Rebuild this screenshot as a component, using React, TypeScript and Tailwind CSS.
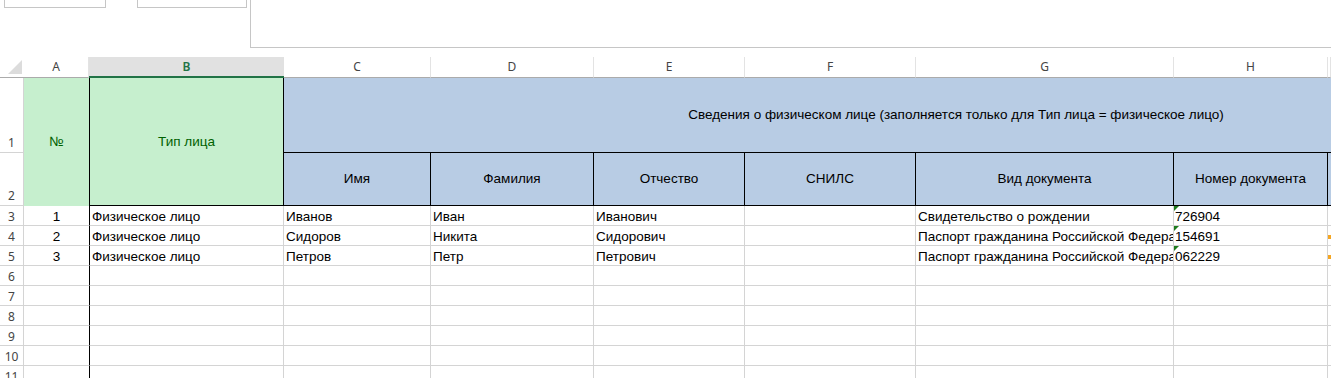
import React from 'react';

const cols = ['A', 'B', 'C', 'D', 'E', 'F', 'G', 'H', ''];

const subHeaders = ['Имя', 'Фамилия', 'Отчество', 'СНИЛС', 'Вид документа', 'Номер документа'];

const people = [
  ['1', 'Физическое лицо', 'Иванов', 'Иван', 'Иванович', '', 'Свидетельство о рождении', '726904'],
  ['2', 'Физическое лицо', 'Сидоров', 'Никита', 'Сидорович', '', 'Паспорт гражданина Российской Федерации', '154691'],
  ['3', 'Физическое лицо', 'Петров', 'Петр', 'Петрович', '', 'Паспорт гражданина Российской Федерации', '062229'],
];

const emptyRows = [6, 7, 8, 9, 10, 11];

const cellFont = { fontFamily: '"Liberation Sans", Arial, sans-serif' };
const headFont = { fontFamily: '"Noto Sans", sans-serif' };

const App: React.FC = () => {
  const rows = [...people, ...emptyRows.map(() => ['', '', '', '', '', '', '', ''])];

  return (
    <div className="min-h-screen bg-white overflow-hidden">
      {/* Ribbon remnants */}
      <div className="flex items-start h-[57px]">
        <div className="ml-[4px] w-[102px] h-[8px] border border-t-0 border-[#c6c6c6]" />
        <div className="ml-[31px] w-[110px] h-[8px] border border-t-0 border-[#c6c6c6]" />
        <div className="ml-[3px] flex-1 h-[48px] border-l border-b border-[#c6c6c6]" />
      </div>

      {/* Sheet */}
      <div
        className="grid grid-cols-[24px_65px_195px_147px_163px_151px_171px_258px_154px_1fr] grid-rows-[21px_75px_53px_repeat(9,20px)] text-[13.5px] leading-[16px] text-black"
        style={cellFont}
      >
        {/* Column headers */}
        <div className="relative border-b border-[#ababab] bg-white">
          <svg className="absolute right-[2px] bottom-[3px]" width="14" height="14" viewBox="0 0 14 14">
            <polygon points="14,0 14,14 0,14" fill="#dcdcdc" />
          </svg>
        </div>
        {cols.map((c) =>
          c === 'B' ? (
            <div
              key={c}
              className="flex items-center justify-center bg-[#e1e1e1] border-b-2 border-[#217346] text-[12px] font-semibold text-[#217346]"
              style={headFont}
            >
              {c}
            </div>
          ) : (
            <div
              key={c || 'I'}
              className="flex items-center justify-center bg-white border-r border-r-[#e3e3e3] border-b border-b-[#ababab] text-[12px] text-[#444]"
              style={headFont}
            >
              {c}
            </div>
          )
        )}

        {/* Row 1 */}
        <div className="flex items-end justify-center pb-[1px] border-r border-b border-[#d4d4d4] text-[12px] text-[#444]" style={headFont}>
          1
        </div>
        <div className="row-span-2 flex items-center justify-center bg-[#c6efce] text-[#006100]">№</div>
        <div className="row-span-2 flex items-center justify-center bg-[#c6efce] text-[#006100] border-l border-r border-b border-black">
          Тип лица
        </div>
        <div className="col-span-7 overflow-hidden bg-[#b8cce4] border-b border-black">
          <div className="w-[1344px] h-full flex items-center justify-center whitespace-nowrap">
            Сведения о физическом лице (заполняется только для Тип лица = физическое лицо)
          </div>
        </div>

        {/* Row 2 */}
        <div className="flex items-end justify-center pb-[1px] border-r border-b border-[#d4d4d4] text-[12px] text-[#444]" style={headFont}>
          2
        </div>
        {subHeaders.map((h) => (
          <div key={h} className="flex items-center justify-center bg-[#b8cce4] border-r border-b border-black whitespace-nowrap">
            {h}
          </div>
        ))}
        <div className="bg-[#b8cce4] border-b border-black" />

        {/* Data rows */}
        {rows.map((r, i) => (
          <React.Fragment key={i}>
            <div
              className="flex items-center justify-center pt-[3px] border-r border-b border-[#d4d4d4] text-[12px] text-[#444]"
              style={headFont}
            >
              {i + 3}
            </div>
            <div className="flex items-center justify-center pt-[3px] border-b border-[#d4d4d4]">{r[0]}</div>
            <div className="flex items-center pl-[2px] pt-[3px] border-l border-l-black border-r border-r-[#d4d4d4] border-b border-b-[#d4d4d4] whitespace-nowrap">
              {r[1]}
            </div>
            {r.slice(2, 7).map((v, j) => (
              <div key={j} className="flex items-center pl-[2px] pt-[3px] border-r border-b border-[#d4d4d4] overflow-hidden whitespace-nowrap">
                {v}
              </div>
            ))}
            <div className="relative flex items-center pl-[1px] pt-[3px] border-r border-b border-[#d4d4d4] whitespace-nowrap">
              {r[7] && (
                <span className="absolute top-0 left-0 w-0 h-0 border-t-[5px] border-t-[#1e7b1e] border-r-[5px] border-r-transparent" />
              )}
              {r[7]}
            </div>
            <div className="flex items-center pt-[3px] border-b border-[#d4d4d4]">
              {(i === 1 || i === 2) && <span className="w-[3px] h-[4px] bg-[#f5a623]" />}
            </div>
          </React.Fragment>
        ))}
      </div>
    </div>
  );
};

export default App;
